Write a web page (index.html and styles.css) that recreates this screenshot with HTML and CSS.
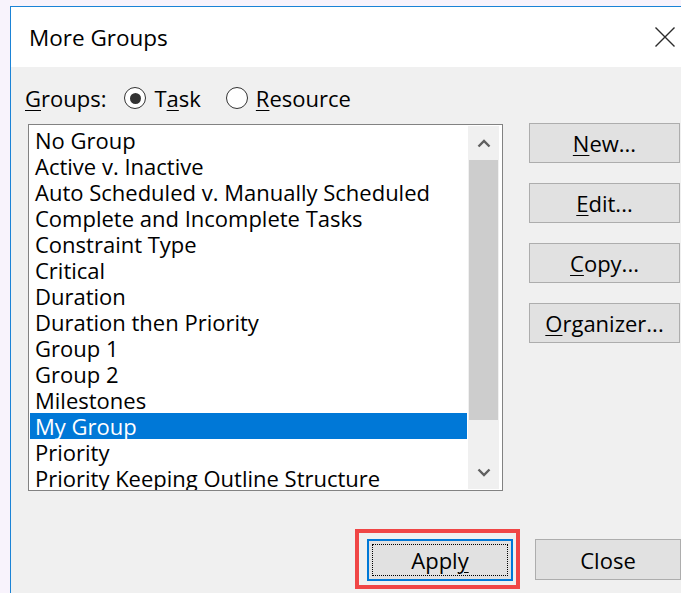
FILE: index.html
```html
<!DOCTYPE html>
<html>
<head>
<meta charset="utf-8">
<title>More Groups</title>
<link rel="stylesheet" href="styles.css">
</head>
<body>
<div class="dialog">
  <div class="titlebar">
    <span class="title">More Groups</span>
    <svg class="close-x" width="20" height="20" viewBox="0 0 20 20" aria-label="Close">
      <path d="M0.5 0.5L19.5 19.5M19.5 0.5L0.5 19.5" stroke="#2b2b2b" stroke-width="1.4" fill="none"/>
    </svg>
  </div>
  <div class="content">
    <div class="groups-row">
      <span class="label"><u>G</u>roups:</span>
      <label class="radio checked"><span class="circle"></span><span>T<u>a</u>sk</span></label>
      <label class="radio"><span class="circle"></span><span><u>R</u>esource</span></label>
    </div>
    <div class="main">
      <div class="listbox">
        <ul class="items">
          <li>No Group</li>
          <li>Active v. Inactive</li>
          <li>Auto Scheduled v. Manually Scheduled</li>
          <li>Complete and Incomplete Tasks</li>
          <li>Constraint Type</li>
          <li>Critical</li>
          <li>Duration</li>
          <li>Duration then Priority</li>
          <li>Group 1</li>
          <li>Group 2</li>
          <li>Milestones</li>
          <li class="selected">My Group</li>
          <li>Priority</li>
          <li>Priority Keeping Outline Structure</li>
        </ul>
        <div class="scrollbar">
          <div class="sb-btn">
            <svg width="14" height="9" viewBox="0 0 14 9"><path d="M1.5 7.5L7 2l5.5 5.5" stroke="#606060" stroke-width="2.4" fill="none"/></svg>
          </div>
          <div class="sb-track"><div class="sb-thumb"></div></div>
          <div class="sb-btn">
            <svg width="14" height="9" viewBox="0 0 14 9"><path d="M1.5 1.5L7 7l5.5-5.5" stroke="#606060" stroke-width="2.4" fill="none"/></svg>
          </div>
        </div>
      </div>
      <div class="side">
        <button class="btn"><u>N</u>ew...</button>
        <button class="btn"><u>E</u>dit...</button>
        <button class="btn"><u>C</u>opy...</button>
        <button class="btn"><u>O</u>rganizer...</button>
      </div>
    </div>
    <div class="footer">
      <div class="apply-wrap">
        <button class="btn apply">Appl<u>y</u></button>
        <span class="callout"></span>
      </div>
      <button class="btn close">Close</button>
    </div>
  </div>
</div>
</body>
</html>
```
FILE: styles.css
```css
html, body {
  margin: 0;
  height: 100%;
  overflow: hidden;
}

body {
  background: #f8f3fc;
  font-family: "Open Sans", "Noto Sans", sans-serif;
  color: #000;
}

u {
  text-decoration-thickness: 1px;
  text-underline-offset: 3px;
}

.dialog {
  margin: 6px 0 0 10px;
  border-top: 1px solid #1b83d6;
  border-left: 1px solid #1b83d6;
  background: #f0f0f0;
  height: 700px;
}

/* title bar */
.titlebar {
  height: 60px;
  background: #fff;
  display: flex;
  align-items: center;
  justify-content: space-between;
  padding: 0 6px 0 18px;
}

.title {
  font-size: 22.5px;
}

/* dialog body */
.content {
  padding: 18px 0 0 17px;
}

.groups-row {
  display: flex;
  align-items: center;
  height: 26px;
  font-size: 22px;
  margin-left: -3px;
}

.label {
  margin-right: 18px;
}

.radio {
  display: flex;
  align-items: center;
  gap: 8px;
  margin-right: 25px;
}

.circle {
  width: 22px;
  height: 22px;
  box-sizing: border-box;
  border: 1.5px solid #333;
  border-radius: 50%;
  background: #fff;
  display: flex;
  align-items: center;
  justify-content: center;
}

.radio.checked .circle::after {
  content: "";
  width: 11px;
  height: 11px;
  border-radius: 50%;
  background: #333;
}

.main {
  display: flex;
  align-items: flex-start;
  gap: 26px;
  margin-top: 13px;
}

/* list with scrollbar */
.listbox {
  width: 475px;
  height: 367px;
  box-sizing: border-box;
  border: 1px solid #828282;
  background: #fff;
  display: flex;
}

.items {
  list-style: none;
  margin: 0;
  padding: 2px 1px 0 1px;
  flex: 1;
  overflow: hidden;
}

.items li {
  height: 26px;
  line-height: 26px;
  padding-left: 5px;
  font-size: 22px;
  white-space: nowrap;
}

.items li.selected {
  background: #0078d7;
  color: #fff;
}

.scrollbar {
  width: 31px;
  margin: 1px 3px 1px 0;
  background: #f0f0f0;
  display: flex;
  flex-direction: column;
}

.sb-btn {
  height: 34px;
  display: flex;
  align-items: center;
  justify-content: center;
}

.sb-track {
  flex: 1;
}

.sb-thumb {
  height: 260px;
  margin: 0 1px;
  background: #cdcdcd;
}

/* command buttons */
.side {
  display: flex;
  flex-direction: column;
  gap: 20px;
  margin-top: -1px;
  width: 151px;
}

.btn {
  height: 40px;
  box-sizing: border-box;
  border: 1px solid #adadad;
  background: #e1e1e1;
  font-family: inherit;
  font-size: 22px;
  color: #000;
  padding: 0;
}

.footer {
  display: flex;
  justify-content: flex-end;
  gap: 22px;
  margin-top: 48px;
}

.apply-wrap {
  position: relative;
}

.btn.apply {
  width: 146px;
  height: 42px;
  border: 2px solid #0078d7;
  outline: 1px dotted #000;
  outline-offset: -6px;
}

.btn.close {
  width: 146px;
  height: 41px;
}

/* red annotation frame around Apply */
.callout {
  position: absolute;
  left: -12px;
  right: -7px;
  top: -10px;
  bottom: -8px;
  border: 4px solid #f04646;
  pointer-events: none;
}
```
